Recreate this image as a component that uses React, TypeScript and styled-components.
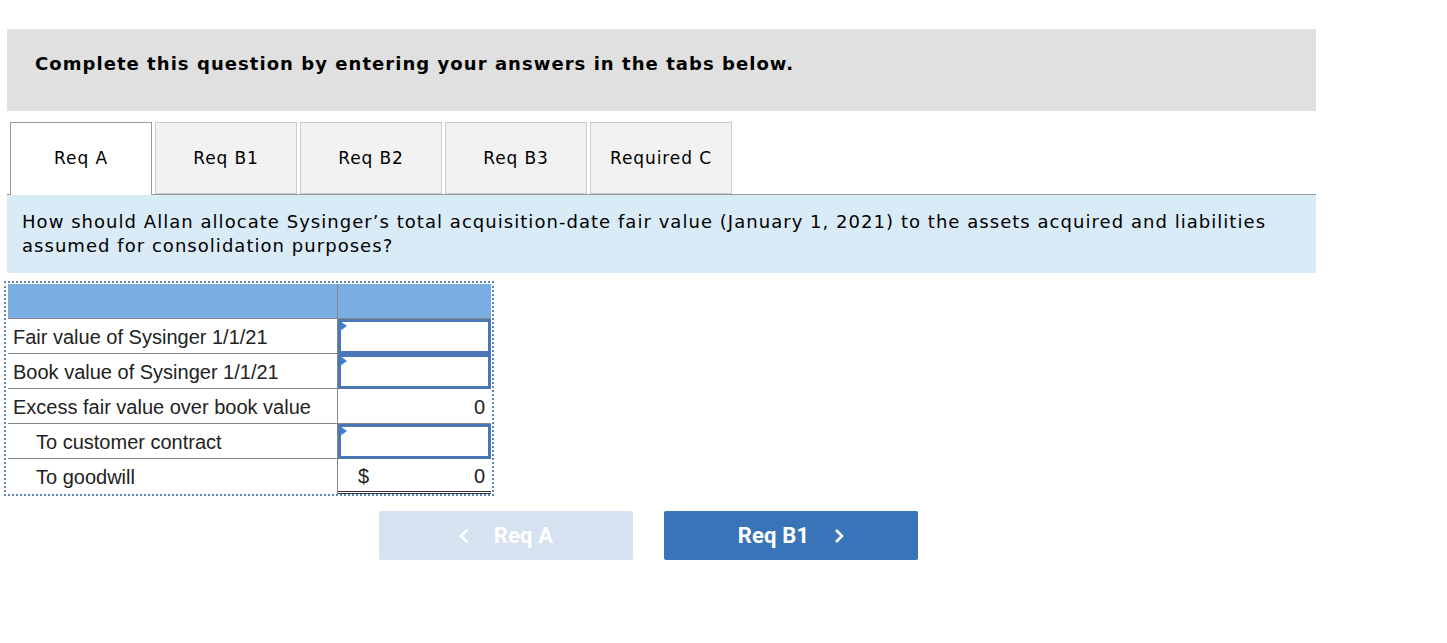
import React from "react";
import styled, { createGlobalStyle } from "styled-components";

const GlobalStyle = createGlobalStyle`
  body {
    margin: 0;
    background: #fff;
    font-family: "DejaVu Sans", Verdana, sans-serif;
    color: #000;
  }
`;

const Page = styled.div`
  padding: 29px 0 0 7px;
  width: 1309px;
`;

const Banner = styled.div`
  background: #e0e0e0;
  height: 82px;
  padding: 0 28px 13px;
  display: flex;
  align-items: center;
  font-size: 18px;
  letter-spacing: 1.05px;
  font-weight: bold;
  box-sizing: border-box;
`;

const Tabs = styled.div`
  display: flex;
  gap: 3px;
  margin-top: 11px;
  padding-left: 3px;
  border-bottom: 1px solid #999;
  height: 72px;
`;

const Tab = styled.div<{ $active?: boolean }>`
  width: 142px;
  height: ${(p) => (p.$active ? "73px" : "72px")};
  box-sizing: border-box;
  display: flex;
  align-items: center;
  justify-content: center;
  font-size: 17px;
  letter-spacing: 0.9px;
  background: ${(p) => (p.$active ? "#fff" : "#f2f2f2")};
  border: 1px solid ${(p) => (p.$active ? "#999" : "#ccc")};
  border-bottom: ${(p) => (p.$active ? "none" : "1px solid #ccc")};
  position: relative;
  z-index: ${(p) => (p.$active ? 1 : 0)};
  padding-bottom: ${(p) => (p.$active ? "2px" : "1px")};
`;

const Question = styled.div`
  background: #daebf8;
  height: 78px;
  box-sizing: border-box;
  padding: 15px 15px;
  font-size: 18px;
  letter-spacing: 1.04px;
  line-height: 24px;
`;

const TableWrap = styled.div`
  margin: 8px 0 0 -3px;
  width: 490px;
  box-sizing: border-box;
  border: 2px dotted #5b86c2;
  padding: 1px 1px 0 2px;
`;

const Grid = styled.div`
  display: grid;
  grid-template-columns: 330px 153px;
  grid-auto-rows: 35px;
  font-family: "Liberation Sans", Arial, sans-serif;
  font-size: 20px;
  color: #222;
`;

const HeadCell = styled.div`
  background: #7aaee2;
  border-bottom: 1px solid #888;
  &:first-child {
    border-right: 1px solid #888;
  }
`;

const LabelCell = styled.div<{ $indent?: boolean; $last?: boolean }>`
  display: flex;
  align-items: center;
  padding: 2px 0 0 ${(p) => (p.$indent ? "28px" : "5px")};
  border-bottom: ${(p) => (p.$last ? "none" : "1px solid #888")};
  border-right: 1px solid #888;
  white-space: nowrap;
  box-sizing: border-box;
`;

const ValueCell = styled.div<{ $total?: boolean }>`
  display: flex;
  align-items: center;
  justify-content: ${(p) => (p.$total ? "space-between" : "flex-end")};
  padding: 2px 6px 0 ${(p) => (p.$total ? "20px" : "0")};
  border-bottom: ${(p) => (p.$total ? "3px double #333" : "1px solid #888")};
  box-sizing: border-box;
`;

const InputCell = styled.div`
  border: 3px solid #4a78b4;
  position: relative;
  background: #fff;
  box-sizing: border-box;
  &::before {
    content: "";
    position: absolute;
    left: -1px;
    top: -1px;
    border-top: 5px solid transparent;
    border-bottom: 5px solid transparent;
    border-left: 7px solid #3f7fd0;
  }
`;

const Nav = styled.div`
  display: flex;
  gap: 31px;
  margin: 15px 0 0 372px;
`;

const NavButton = styled.button<{ $disabled?: boolean }>`
  width: 254px;
  height: 49px;
  border: none;
  border-radius: 2px;
  background: ${(p) => (p.$disabled ? "#d6e2f0" : "#3a74b8")};
  color: #fff;
  font-family: Roboto, "Liberation Sans", sans-serif;
  font-weight: bold;
  font-size: 22px;
  display: flex;
  align-items: center;
  justify-content: center;
  gap: 25px;
  letter-spacing: 0.2px;
  padding: 0;
`;

const Chevron = ({ dir }: { dir: "left" | "right" }) => (
  <svg width="10" height="16" viewBox="0 0 10 16">
    <path
      d={dir === "left" ? "M8 2 L2 8 L8 14" : "M2 2 L8 8 L2 14"}
      fill="none"
      stroke="#fff"
      strokeWidth="2.6"
    />
  </svg>
);

export default function App() {
  return (
    <Page>
      <GlobalStyle />
      <Banner>Complete this question by entering your answers in the tabs below.</Banner>
      <Tabs>
        <Tab $active>Req A</Tab>
        <Tab>Req B1</Tab>
        <Tab>Req B2</Tab>
        <Tab>Req B3</Tab>
        <Tab>Required C</Tab>
      </Tabs>
      <Question>
        How should Allan allocate Sysinger’s total acquisition-date fair value (January 1, 2021) to
        the assets acquired and liabilities assumed for consolidation purposes?
      </Question>
      <TableWrap>
        <Grid>
          <HeadCell />
          <HeadCell />
          <LabelCell>Fair value of Sysinger 1/1/21</LabelCell>
          <InputCell />
          <LabelCell>Book value of Sysinger 1/1/21</LabelCell>
          <InputCell />
          <LabelCell>Excess fair value over book value</LabelCell>
          <ValueCell>0</ValueCell>
          <LabelCell $indent>To customer contract</LabelCell>
          <InputCell />
          <LabelCell $indent $last>
            To goodwill
          </LabelCell>
          <ValueCell $total>
            <span>$</span>
            <span>0</span>
          </ValueCell>
        </Grid>
      </TableWrap>
      <Nav>
        <NavButton $disabled>
          <Chevron dir="left" />
          Req A
        </NavButton>
        <NavButton>
          Req B1
          <Chevron dir="right" />
        </NavButton>
      </Nav>
    </Page>
  );
}
